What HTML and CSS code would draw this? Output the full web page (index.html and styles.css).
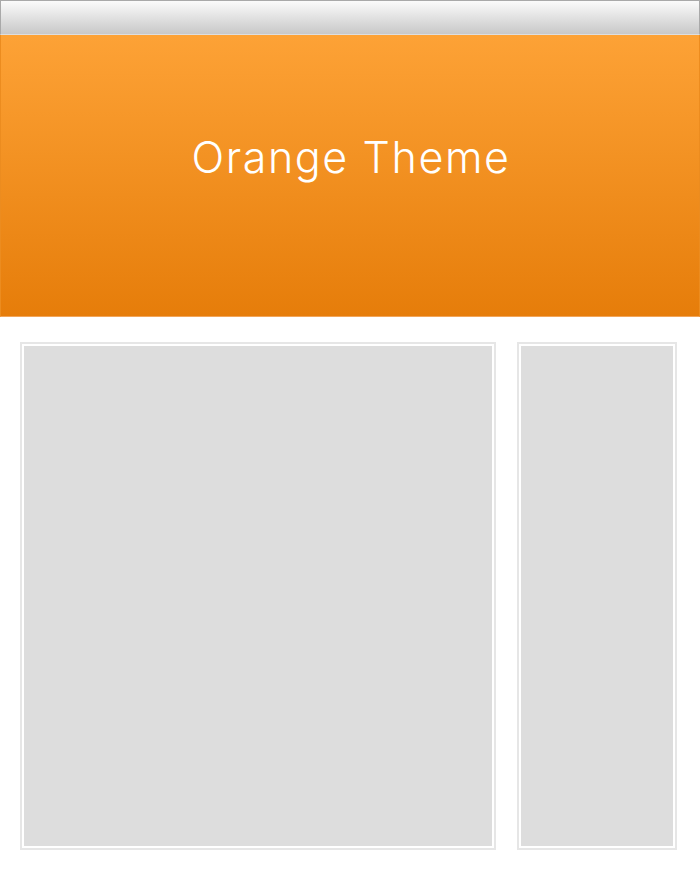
FILE: index.html
```html
<!DOCTYPE html>
<html>
<head>
<meta charset="utf-8">
<link rel="stylesheet" href="styles.css">
</head>
<body>
<div class="topbar"></div>
<header class="banner">
  <h1 class="title">Orange Theme</h1>
</header>
<main class="content">
  <section class="card card-main"><div class="card-inner"></div></section>
  <aside class="card card-side"><div class="card-inner"></div></aside>
</main>
</body>
</html>
```
FILE: styles.css
```css
html, body {
  margin: 0;
  padding: 0;
  background: #ffffff;
}
body {
  width: 700px;
  height: 873px;
  overflow: hidden;
}
.topbar {
  height: 33px;
  border: 1px solid #a9a9a9;
  border-bottom: 1px solid #dedede;
  background: linear-gradient(#fbfbfb, #c8c8c8);
}
.banner {
  box-sizing: border-box;
  height: 282px;
  border-left: 1px solid #ec8c1f;
  border-right: 1px solid #ec8c1f;
  border-bottom: 1px solid #f2a55a;
  background: linear-gradient(#fda236, #e67d0a);
  display: flex;
  justify-content: center;
  padding-top: 97px;
}
.title {
  margin: 0;
  padding-left: 2px;
  font-family: Inter, "Helvetica Neue", sans-serif;
  font-weight: 300;
  font-size: 43px;
  line-height: 50px;
  letter-spacing: 1.6px;
  color: #ffffff;
}
.content {
  display: grid;
  grid-template-columns: 476px 160px;
  column-gap: 21px;
  padding: 25px 0 0 20px;
}
.card {
  height: 508px;
  box-sizing: border-box;
  border: 2px solid #e6e6e6;
  padding: 2px;
  background: #ffffff;
}
.card-inner {
  height: 100%;
  background: #dddddd;
}
```
